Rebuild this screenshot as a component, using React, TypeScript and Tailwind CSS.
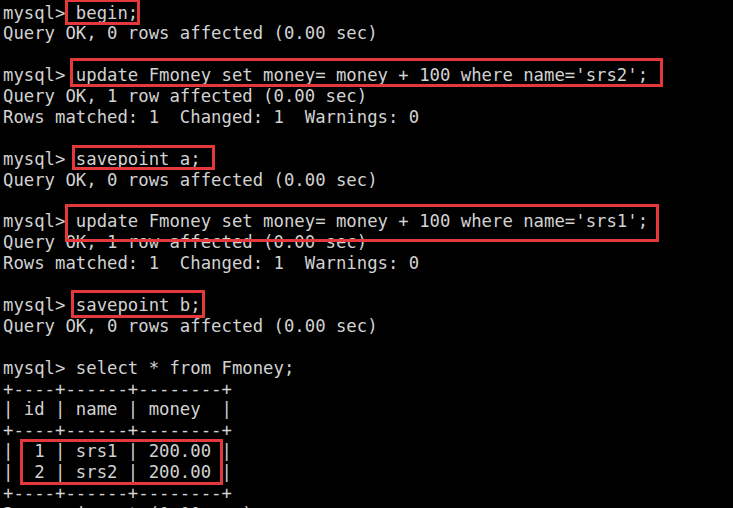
import React from "react";

const lines = [
  "mysql> begin;",
  "Query OK, 0 rows affected (0.00 sec)",
  "",
  "mysql> update Fmoney set money= money + 100 where name='srs2';",
  "Query OK, 1 row affected (0.00 sec)",
  "Rows matched: 1  Changed: 1  Warnings: 0",
  "",
  "mysql> savepoint a;",
  "Query OK, 0 rows affected (0.00 sec)",
  "",
  "mysql> update Fmoney set money= money + 100 where name='srs1';",
  "Query OK, 1 row affected (0.00 sec)",
  "Rows matched: 1  Changed: 1  Warnings: 0",
  "",
  "mysql> savepoint b;",
  "Query OK, 0 rows affected (0.00 sec)",
  "",
  "mysql> select * from Fmoney;",
  "+----+------+--------+",
  "| id | name | money  |",
  "+----+------+--------+",
  "|  1 | srs1 | 200.00 |",
  "|  2 | srs2 | 200.00 |",
  "+----+------+--------+",
  "2 rows in set (0.00 sec)",
];

export default function App() {
  return (
    <div className="relative w-[733px] h-[508px] overflow-hidden bg-black">
      <div
        className="pl-[3px] pt-[2.5px] text-[17.3px] leading-[20.9px] text-[#d2d2d2] whitespace-pre"
        style={{ fontFamily: '"DejaVu Sans Mono", monospace' }}
      >
        {lines.map((l, i) => (
          <div key={i} className="h-[20.9px]">
            {l}
          </div>
        ))}
      </div>
      <div className="absolute left-[65px] top-[-1px] w-[75px] h-[26px] border-[3px] border-[#e5383b]" />
      <div className="absolute left-[70px] top-[58px] w-[593px] h-[29px] border-[3px] border-[#e5383b]" />
      <div className="absolute left-[72px] top-[145px] w-[143px] h-[25px] border-[3px] border-[#e5383b]" />
      <div className="absolute left-[65px] top-[204px] w-[594px] h-[38px] border-[3px] border-[#e5383b]" />
      <div className="absolute left-[71px] top-[290px] w-[134px] h-[28px] border-[3px] border-[#e5383b]" />
      <div className="absolute left-[20px] top-[439px] w-[203px] h-[46px] border-[3px] border-[#e5383b]" />
    </div>
  );
}
